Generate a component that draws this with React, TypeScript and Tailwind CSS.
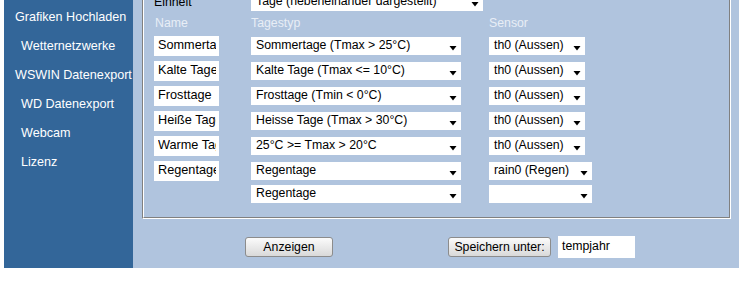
import React from "react";

const font = { fontFamily: '"Liberation Sans", Arial, sans-serif' };

function Arrow() {
  return (
    <svg width="8" height="5" viewBox="0 0 8 5" className="absolute right-[4px] top-[9px]">
      <polygon points="0.5,0 7.5,0 4,4.5" fill="#000" />
    </svg>
  );
}

function Sel({ text, w }: { text: string; w: string }) {
  return (
    <div className={`relative h-[18px] bg-white ${w} shrink-0`}>
      <span className="absolute left-[5px] top-[1px] leading-[15px] whitespace-nowrap">{text}</span>
      <Arrow />
    </div>
  );
}

function NameInput({ text }: { text: string }) {
  return (
    <div className="h-[20px] w-[65px] bg-white shrink-0 ml-[10px] pl-[4px] pt-[2px]">
      <div className="w-[58px] overflow-hidden">
        <span className="block leading-[15px] whitespace-nowrap text-[12.7px]">{text}</span>
      </div>
    </div>
  );
}

const rows = [
  ["Sommertage", "Sommertage (Tmax > 25°C)", "th0 (Aussen)"],
  ["Kalte Tage", "Kalte Tage (Tmax <= 10°C)", "th0 (Aussen)"],
  ["Frosttage", "Frosttage (Tmin < 0°C)", "th0 (Aussen)"],
  ["Heiße Tage", "Heisse Tage (Tmax > 30°C)", "th0 (Aussen)"],
  ["Warme Tage", "25°C >= Tmax > 20°C", "th0 (Aussen)"],
];

export default function App() {
  return (
    <div className="w-[752px] h-[291px] bg-white overflow-hidden text-[12.3px] text-black" style={font}>
      <div className="flex h-[268px] ml-[4px] w-[735px]">
        <div className="w-[129px] shrink-0 bg-[#336699] text-white text-[12.6px] pt-[3px] overflow-hidden">
          {[
            ["Grafiken Hochladen", "pl-[11px]"],
            ["Wetternetzwerke", "pl-[17px]"],
            ["WSWIN Datenexport", "pl-[11px]"],
            ["WD Datenexport", "pl-[17px]"],
            ["Webcam", "pl-[17px]"],
            ["Lizenz", "pl-[17px]"],
          ].map(([t, p]) => (
            <div key={t} className={`h-[29px] leading-[29px] whitespace-nowrap ${p}`}>{t}</div>
          ))}
        </div>
        <div className="flex-1 bg-[#b0c4de] overflow-hidden flex flex-col">
          <div className="ml-[9px] mt-[-30px] w-[589px] h-[249px] shrink-0 border border-l-[#808080] border-t-[#808080] border-r-white border-b-white">
            <div className="h-full border border-l-white border-t-white border-r-[#808080] border-b-[#808080] pt-[21px]">
              <div className="flex items-center h-[18px]">
                <div className="w-[107px] pl-[10px] leading-[15px]">Einheit</div>
                <Sel text="Tage (nebeneinander dargestellt)" w="w-[232px]" />
              </div>
              <div className="flex h-[26px] pt-[5px] text-[#e8eef6] leading-[14px]">
                <div className="w-[107px] pl-[11px]">Name</div>
                <div className="w-[238px]">Tagestyp</div>
                <div>Sensor</div>
              </div>
              <div className="flex flex-col gap-[7px]">
                {rows.map(([n, t, s]) => (
                  <div key={n} className="flex items-center h-[18px]">
                    <NameInput text={n} />
                    <div className="ml-[32px]"><Sel text={t} w="w-[210px]" /></div>
                    <div className="ml-[28px]"><Sel text={s} w="w-[96px]" /></div>
                  </div>
                ))}
                <div className="flex items-center h-[18px]">
                  <NameInput text="Regentage" />
                  <div className="ml-[32px]"><Sel text="Regentage" w="w-[210px]" /></div>
                  <div className="ml-[28px]"><Sel text="rain0 (Regen)" w="w-[103px]" /></div>
                </div>
              </div>
              <div className="flex items-center h-[18px] mt-[5px]">
                <div className="w-[107px]" />
                <Sel text="Regentage" w="w-[210px]" />
                <div className="ml-[28px]"><Sel text="" w="w-[103px]" /></div>
              </div>
            </div>
          </div>
          <div className="flex items-center mt-[17px] h-[22px]">
            <button className="ml-[112px] w-[88px] h-[20px] rounded-[3px] border border-[#8c8c8c] bg-gradient-to-b from-[#fbfbfb] to-[#d9d9d9] leading-[16px]">Anzeigen</button>
            <button className="ml-[115px] w-[103px] h-[20px] rounded-[3px] border border-[#8c8c8c] bg-gradient-to-b from-[#fbfbfb] to-[#d9d9d9] leading-[16px] whitespace-nowrap">Speichern unter:</button>
            <div className="ml-[7px] w-[77px] h-[22px] bg-white pl-[4px] leading-[20px]">tempjahr</div>
          </div>
        </div>
      </div>
    </div>
  );
}
